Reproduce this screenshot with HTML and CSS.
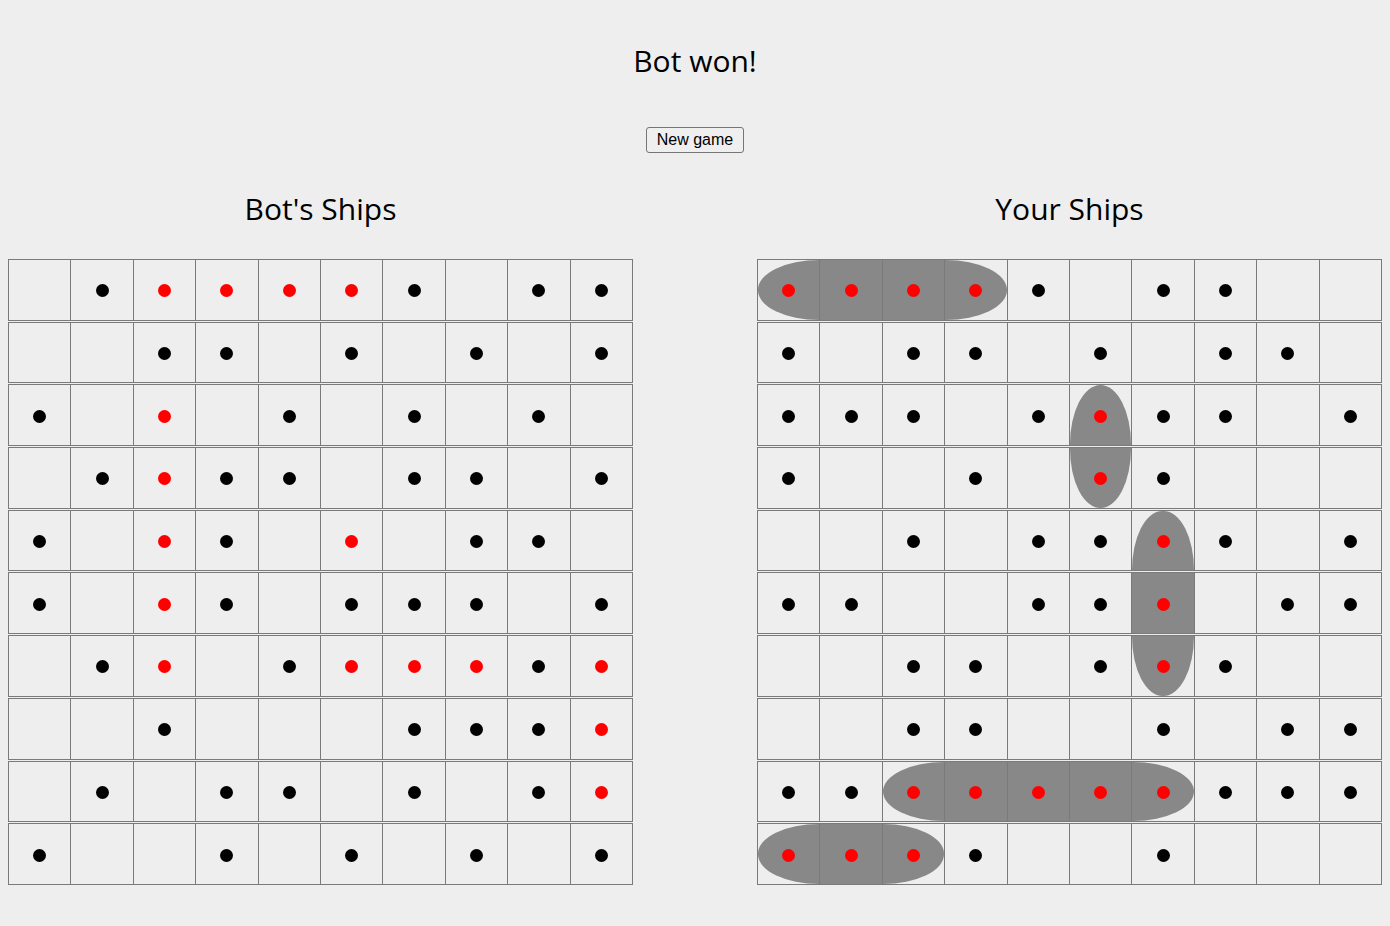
FILE: index.html
```html
<!DOCTYPE html>
<html lang="en">
<head>
<meta charset="utf-8">
<title>Battleship</title>
<link rel="stylesheet" href="styles.css">
</head>
<body>
<main class="game">
  <h1 class="status">Bot won!</h1>
  <button class="new-game" type="button">New game</button>
  <div class="boards">
    <section class="side">
      <h2 class="side-title">Bot's Ships</h2>
      <div class="board">
        <div class="row"><div class="cell"></div><div class="cell"><span class="dot"></span></div><div class="cell"><span class="dot hit"></span></div><div class="cell"><span class="dot hit"></span></div><div class="cell"><span class="dot hit"></span></div><div class="cell"><span class="dot hit"></span></div><div class="cell"><span class="dot"></span></div><div class="cell"></div><div class="cell"><span class="dot"></span></div><div class="cell"><span class="dot"></span></div></div>
        <div class="row"><div class="cell"></div><div class="cell"></div><div class="cell"><span class="dot"></span></div><div class="cell"><span class="dot"></span></div><div class="cell"></div><div class="cell"><span class="dot"></span></div><div class="cell"></div><div class="cell"><span class="dot"></span></div><div class="cell"></div><div class="cell"><span class="dot"></span></div></div>
        <div class="row"><div class="cell"><span class="dot"></span></div><div class="cell"></div><div class="cell"><span class="dot hit"></span></div><div class="cell"></div><div class="cell"><span class="dot"></span></div><div class="cell"></div><div class="cell"><span class="dot"></span></div><div class="cell"></div><div class="cell"><span class="dot"></span></div><div class="cell"></div></div>
        <div class="row"><div class="cell"></div><div class="cell"><span class="dot"></span></div><div class="cell"><span class="dot hit"></span></div><div class="cell"><span class="dot"></span></div><div class="cell"><span class="dot"></span></div><div class="cell"></div><div class="cell"><span class="dot"></span></div><div class="cell"><span class="dot"></span></div><div class="cell"></div><div class="cell"><span class="dot"></span></div></div>
        <div class="row"><div class="cell"><span class="dot"></span></div><div class="cell"></div><div class="cell"><span class="dot hit"></span></div><div class="cell"><span class="dot"></span></div><div class="cell"></div><div class="cell"><span class="dot hit"></span></div><div class="cell"></div><div class="cell"><span class="dot"></span></div><div class="cell"><span class="dot"></span></div><div class="cell"></div></div>
        <div class="row"><div class="cell"><span class="dot"></span></div><div class="cell"></div><div class="cell"><span class="dot hit"></span></div><div class="cell"><span class="dot"></span></div><div class="cell"></div><div class="cell"><span class="dot"></span></div><div class="cell"><span class="dot"></span></div><div class="cell"><span class="dot"></span></div><div class="cell"></div><div class="cell"><span class="dot"></span></div></div>
        <div class="row"><div class="cell"></div><div class="cell"><span class="dot"></span></div><div class="cell"><span class="dot hit"></span></div><div class="cell"></div><div class="cell"><span class="dot"></span></div><div class="cell"><span class="dot hit"></span></div><div class="cell"><span class="dot hit"></span></div><div class="cell"><span class="dot hit"></span></div><div class="cell"><span class="dot"></span></div><div class="cell"><span class="dot hit"></span></div></div>
        <div class="row"><div class="cell"></div><div class="cell"></div><div class="cell"><span class="dot"></span></div><div class="cell"></div><div class="cell"></div><div class="cell"></div><div class="cell"><span class="dot"></span></div><div class="cell"><span class="dot"></span></div><div class="cell"><span class="dot"></span></div><div class="cell"><span class="dot hit"></span></div></div>
        <div class="row"><div class="cell"></div><div class="cell"><span class="dot"></span></div><div class="cell"></div><div class="cell"><span class="dot"></span></div><div class="cell"><span class="dot"></span></div><div class="cell"></div><div class="cell"><span class="dot"></span></div><div class="cell"></div><div class="cell"><span class="dot"></span></div><div class="cell"><span class="dot hit"></span></div></div>
        <div class="row"><div class="cell"><span class="dot"></span></div><div class="cell"></div><div class="cell"></div><div class="cell"><span class="dot"></span></div><div class="cell"></div><div class="cell"><span class="dot"></span></div><div class="cell"></div><div class="cell"><span class="dot"></span></div><div class="cell"></div><div class="cell"><span class="dot"></span></div></div>
      </div>
    </section>
    <section class="side">
      <h2 class="side-title">Your Ships</h2>
      <div class="board">
        <div class="row"><div class="cell"><span class="ship start-h"></span><span class="dot hit"></span></div><div class="cell"><span class="ship"></span><span class="dot hit"></span></div><div class="cell"><span class="ship"></span><span class="dot hit"></span></div><div class="cell"><span class="ship end-h"></span><span class="dot hit"></span></div><div class="cell"><span class="dot"></span></div><div class="cell"></div><div class="cell"><span class="dot"></span></div><div class="cell"><span class="dot"></span></div><div class="cell"></div><div class="cell"></div></div>
        <div class="row"><div class="cell"><span class="dot"></span></div><div class="cell"></div><div class="cell"><span class="dot"></span></div><div class="cell"><span class="dot"></span></div><div class="cell"></div><div class="cell"><span class="dot"></span></div><div class="cell"></div><div class="cell"><span class="dot"></span></div><div class="cell"><span class="dot"></span></div><div class="cell"></div></div>
        <div class="row"><div class="cell"><span class="dot"></span></div><div class="cell"><span class="dot"></span></div><div class="cell"><span class="dot"></span></div><div class="cell"></div><div class="cell"><span class="dot"></span></div><div class="cell"><span class="ship start-v"></span><span class="dot hit"></span></div><div class="cell"><span class="dot"></span></div><div class="cell"><span class="dot"></span></div><div class="cell"></div><div class="cell"><span class="dot"></span></div></div>
        <div class="row"><div class="cell"><span class="dot"></span></div><div class="cell"></div><div class="cell"></div><div class="cell"><span class="dot"></span></div><div class="cell"></div><div class="cell"><span class="ship end-v"></span><span class="dot hit"></span></div><div class="cell"><span class="dot"></span></div><div class="cell"></div><div class="cell"></div><div class="cell"></div></div>
        <div class="row"><div class="cell"></div><div class="cell"></div><div class="cell"><span class="dot"></span></div><div class="cell"></div><div class="cell"><span class="dot"></span></div><div class="cell"><span class="dot"></span></div><div class="cell"><span class="ship start-v"></span><span class="dot hit"></span></div><div class="cell"><span class="dot"></span></div><div class="cell"></div><div class="cell"><span class="dot"></span></div></div>
        <div class="row"><div class="cell"><span class="dot"></span></div><div class="cell"><span class="dot"></span></div><div class="cell"></div><div class="cell"></div><div class="cell"><span class="dot"></span></div><div class="cell"><span class="dot"></span></div><div class="cell"><span class="ship"></span><span class="dot hit"></span></div><div class="cell"></div><div class="cell"><span class="dot"></span></div><div class="cell"><span class="dot"></span></div></div>
        <div class="row"><div class="cell"></div><div class="cell"></div><div class="cell"><span class="dot"></span></div><div class="cell"><span class="dot"></span></div><div class="cell"></div><div class="cell"><span class="dot"></span></div><div class="cell"><span class="ship end-v"></span><span class="dot hit"></span></div><div class="cell"><span class="dot"></span></div><div class="cell"></div><div class="cell"></div></div>
        <div class="row"><div class="cell"></div><div class="cell"></div><div class="cell"><span class="dot"></span></div><div class="cell"><span class="dot"></span></div><div class="cell"></div><div class="cell"></div><div class="cell"><span class="dot"></span></div><div class="cell"></div><div class="cell"><span class="dot"></span></div><div class="cell"><span class="dot"></span></div></div>
        <div class="row"><div class="cell"><span class="dot"></span></div><div class="cell"><span class="dot"></span></div><div class="cell"><span class="ship start-h"></span><span class="dot hit"></span></div><div class="cell"><span class="ship"></span><span class="dot hit"></span></div><div class="cell"><span class="ship"></span><span class="dot hit"></span></div><div class="cell"><span class="ship"></span><span class="dot hit"></span></div><div class="cell"><span class="ship end-h"></span><span class="dot hit"></span></div><div class="cell"><span class="dot"></span></div><div class="cell"><span class="dot"></span></div><div class="cell"><span class="dot"></span></div></div>
        <div class="row"><div class="cell"><span class="ship start-h"></span><span class="dot hit"></span></div><div class="cell"><span class="ship"></span><span class="dot hit"></span></div><div class="cell"><span class="ship end-h"></span><span class="dot hit"></span></div><div class="cell"><span class="dot"></span></div><div class="cell"></div><div class="cell"></div><div class="cell"><span class="dot"></span></div><div class="cell"></div><div class="cell"></div><div class="cell"></div></div>
      </div>
    </section>
  </div>
</main>
</body>
</html>
```

FILE: styles.css
```css
html {
  background: #eeeeee;
}

body {
  margin: 8px;
  background: #eeeeee;
  color: #000;
  font-family: "Open Sans", "Noto Sans", sans-serif;
}

.game {
  display: flex;
  flex-direction: column;
  align-items: center;
}

.status {
  margin: 35px 0 0;
  font-size: 30px;
  line-height: 36px;
  font-weight: 400;
}

.new-game {
  margin-top: 48px;
  height: 26px;
  padding: 0 10px;
  font-family: "Liberation Sans", Arial, sans-serif;
  font-size: 16px;
  color: #000;
  background: #efefef;
  border: 1px solid #767676;
  border-radius: 3px;
}

.boards {
  align-self: stretch;
  display: flex;
  justify-content: space-between;
  margin-top: 38px;
}

.side {
  display: flex;
  flex-direction: column;
  align-items: center;
}

.side-title {
  margin: 0 0 32px;
  font-size: 30px;
  line-height: 36px;
  font-weight: 400;
}

.board {
  width: 625px;
  display: flex;
  flex-direction: column;
  gap: 1px;
}

.row {
  box-sizing: border-box;
  height: 61.7px;
  display: grid;
  grid-template-columns: repeat(10, 1fr);
  border-top: 1px solid #7a7a7a;
  border-bottom: 1px solid #7a7a7a;
  border-right: 1px solid #7a7a7a;
}

.cell {
  display: grid;
  place-items: center;
  padding-top: 2px;
  border-left: 1px solid #7a7a7a;
  min-width: 0;
}

.cell > * {
  grid-area: 1 / 1;
}

.ship {
  justify-self: stretch;
  align-self: stretch;
  margin-top: -2px;
  background: #888888;
}

.ship.start-h {
  border-radius: 100% 0 0 100% / 50% 0 0 50%;
}

.ship.end-h {
  border-radius: 0 100% 100% 0 / 0 50% 50% 0;
}

.ship.start-v {
  border-radius: 50% 50% 0 0 / 100% 100% 0 0;
}

.ship.end-v {
  border-radius: 0 0 50% 50% / 0 0 100% 100%;
}

.dot {
  width: 13px;
  height: 13px;
  border-radius: 50%;
  background: #000;
}

.dot.hit {
  background: #ff0000;
}
```
